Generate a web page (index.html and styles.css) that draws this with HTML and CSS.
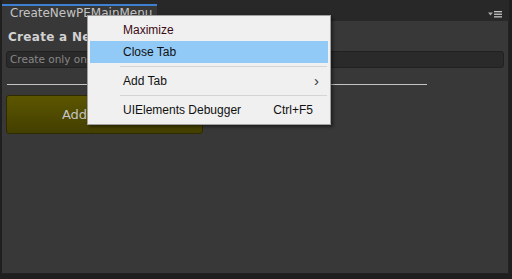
FILE: index.html
```html
<!DOCTYPE html>
<html>
<head>
    <meta charset="utf-8">
    <title>CreateNewPEMainMenu</title>
    <link rel="stylesheet" href="styles.css">
</head>
<body>
<div class="window">
    <div class="tabbar">
        <div class="tab">CreateNewPEMainMenu</div>
        <div class="tab_menu">
            <svg width="16" height="7" viewBox="0 0 16 7">
                <path d="M1 1.5 H6 L3.5 4.5 Z" fill="#a8a8a8"/>
                <rect x="7" y="0" width="8" height="1.3" fill="#c4c4c4"/>
                <rect x="7" y="2.6" width="8" height="1.3" fill="#c4c4c4"/>
                <rect x="7" y="5.2" width="8" height="1.3" fill="#c4c4c4"/>
            </svg>
        </div>
    </div>
    <div class="panel">
        <h2 class="title">Create a New PE Main Menu</h2>
        <div class="field">Create only one main menu per project</div>
        <hr class="rule">
        <button type="button" class="add_button">Add PE Menu</button>
    </div>

    <ul class="context_menu">
        <li class="item first">Maximize</li>
        <li class="item active">Close Tab</li>
        <li class="sep"></li>
        <li class="item">Add Tab <span class="arrow">&#8250;</span></li>
        <li class="sep"></li>
        <li class="item">UIElements Debugger <span class="key">Ctrl+F5</span></li>
    </ul>
</div>
</body>
</html>
```

FILE: styles.css
```css
body {
    margin: 0;
    background-color: #1f1f1f;
    font: 12px "DejaVu Sans", Verdana, sans-serif;
}

.window {
    position: relative;
    width: 512px;
    height: 279px;
    display: flex;
    flex-direction: column;
    box-sizing: border-box;
    padding: 0 3px 5px 2px;
}

.tabbar {
    height: 21px;
    display: flex;
    align-items: flex-end;
    background-color: #282828;
}

.tab {
    width: 147px;
    height: 15px;
    border-top: 2px solid #3d7fd0;
    background-color: #383838;
    color: #c4c4c4;
    padding-left: 8px;
    line-height: 14px;
}

.tab_menu {
    margin-left: auto;
    margin-right: 6px;
    align-self: flex-start;
    margin-top: 11px;
}
.tab_menu svg { display: block; }

.panel {
    flex: 1;
    background-color: #383838;
    border-right: 1px solid #232323;
    border-bottom: 1px solid #232323;
    padding: 0 4px 0 4px;
}

.title {
    margin: 9px 0 0 2px;
    font-size: 12px;
    font-weight: bold;
    color: #d2d2d2;
    letter-spacing: 0.3px;
    line-height: 15px;
}

.field {
    margin-top: 6px;
    height: 15px;
    border: 1px solid #212121;
    border-radius: 3px;
    background-color: #2a2a2a;
    color: #888;
    font-size: 10.5px;
    line-height: 15px;
    padding-left: 3px;
}

.rule {
    width: 420px;
    margin: 16px 0 0 1px;
    border: none;
    border-top: 1px solid #c4c4c4;
    height: 0;
}

.add_button {
    display: block;
    margin-top: 10px;
    width: 197px;
    height: 39px;
    border: 1px solid #2e2b00;
    border-radius: 3px;
    background: linear-gradient(#5c5600, #433f00);
    color: #c4c4c4;
    font: 13px "DejaVu Sans", Verdana, sans-serif;
}

.context_menu {
    position: absolute;
    left: 87px;
    top: 15px;
    width: 244px;
    margin: 0;
    padding: 3px 2px;
    list-style: none;
    background-color: #f0f0f0;
    border: 1px solid #a0a0a0;
    box-shadow: 2px 2px 3px rgba(0, 0, 0, 0.45);
    font: 12px "Liberation Sans", Arial, sans-serif;
    color: #111;
    box-sizing: border-box;
}

.item {
    height: 22px;
    line-height: 22px;
    padding-left: 33px;
    padding-right: 9px;
    display: flex;
}
.item.first { color: #3c0a14; }
.item.active { background-color: #91c9f7; }

.sep {
    height: 1px;
    margin: 3px 1px 3px 30px;
    background-color: #d5d5d5;
}

.arrow {
    margin-left: auto;
    font-size: 15px;
    color: #333;
}
.key {
    margin-left: auto;
    margin-right: 6px;
}
```
